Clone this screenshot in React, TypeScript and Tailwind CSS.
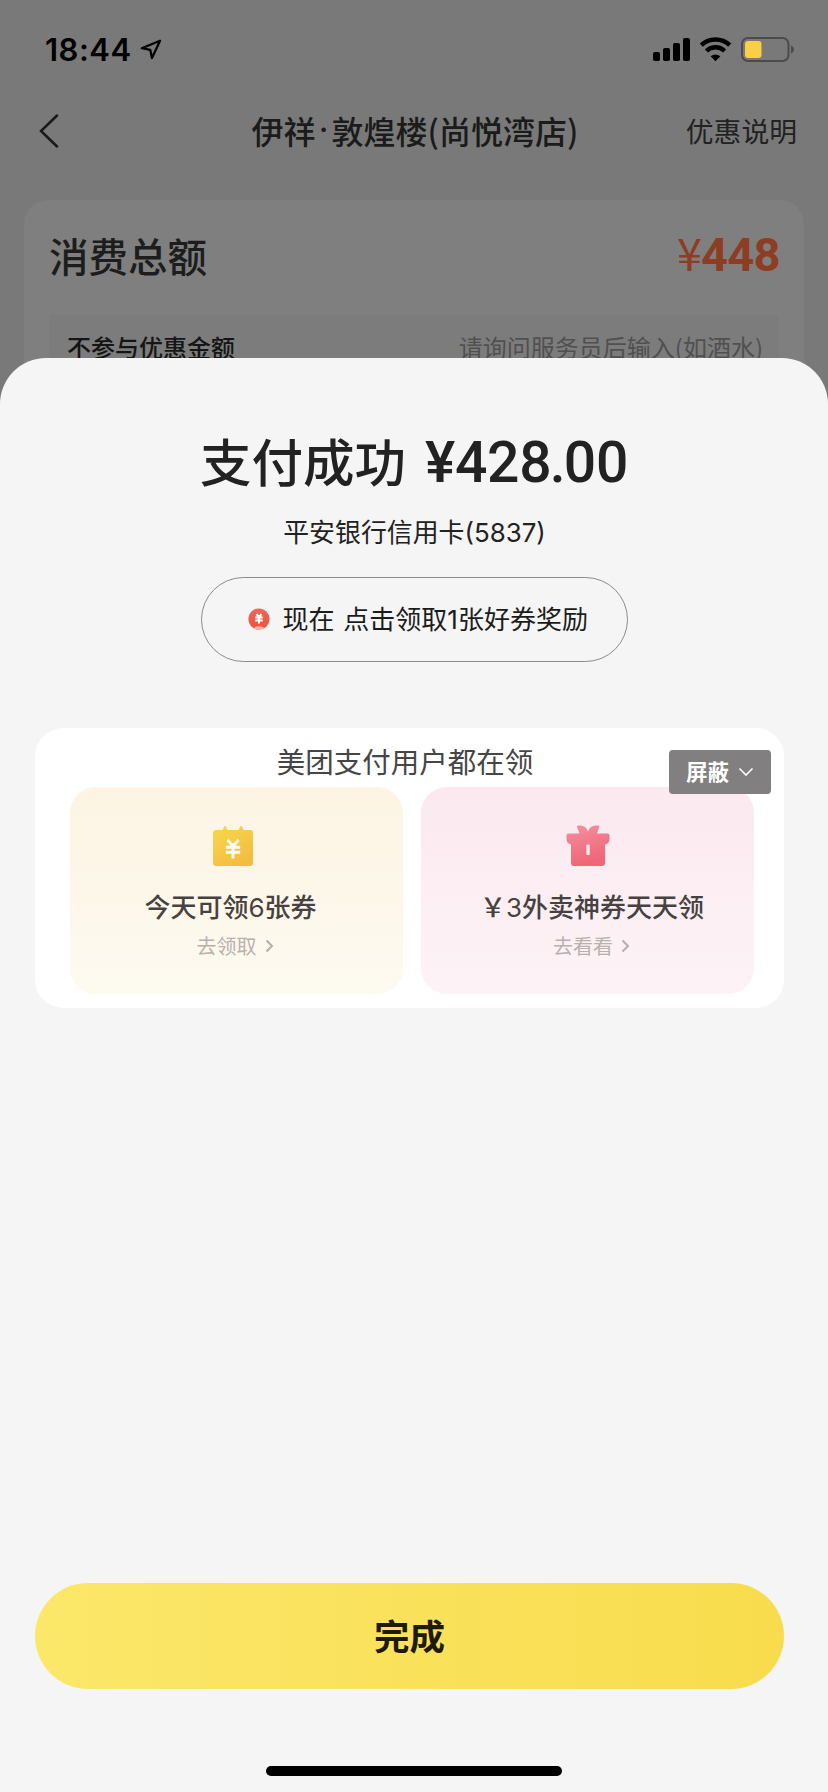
import React from "react";

const StatusIcons = () => (
  <svg className="h-[26px] w-[144px]" viewBox="0 0 144 26">
    <rect x="1" y="15" width="7" height="9" rx="1.8" fill="#000" />
    <rect x="11" y="11" width="7" height="13" rx="1.8" fill="#000" />
    <rect x="21" y="6" width="7" height="18" rx="1.8" fill="#000" />
    <rect x="31" y="1" width="7" height="23" rx="1.8" fill="#000" />
    <g fill="none" stroke="#000">
      <path d="M49.3 8.2a20.5 20.5 0 0 1 28.4 0" strokeWidth="4.4" />
      <path d="M54.4 14a13 13 0 0 1 18.2 0" strokeWidth="4.4" />
    </g>
    <path d="M58.6 19.3a7.3 7.3 0 0 1 9.8 0L63.5 24.3z" fill="#000" />
    <rect x="90" y="1" width="46.5" height="23" rx="6" fill="none" stroke="#4b4b4b" strokeWidth="2" />
    <rect x="93" y="4" width="16.5" height="17" rx="3" fill="#f9cf45" />
    <path d="M139 8.5c4 1.500 4 6.500 0 8z" fill="#4b4b4b" />
  </svg>
);

const LocationIcon = () => (
  <svg className="ml-[8px] h-[22px] w-[22px]" viewBox="0 0 22 22">
    <path d="M20 1.700 1.800 9.200 10.200 10.800 12 19z" fill="none" stroke="#000" strokeWidth="2.300" strokeLinejoin="round" />
  </svg>
);

const CoinIcon = () => (
  <svg className="h-[22px] w-[22px] shrink-0 -translate-y-px" viewBox="0 0 22 22">
    <defs>
      <linearGradient id="coin" x1="0" y1="0" x2="0" y2="1">
        <stop offset="0" stopColor="#e96a5b" />
        <stop offset="1" stopColor="#ec5138" />
      </linearGradient>
      <clipPath id="coinClip"><circle cx="11" cy="11" r="10.600" /></clipPath>
    </defs>
    <circle cx="11" cy="11" r="10.600" fill="url(#coin)" />
    <ellipse cx="11" cy="21.500" rx="6" ry="3.200" fill="#f9b3a4" clipPath="url(#coinClip)" />
    <path d="M8.500 6.200 11 9l2.500-2.800M7.300 9.500h7.400M7.300 12.500h7.400M11 9v6.500" stroke="#fff" strokeWidth="2" fill="none" />
  </svg>
);

const CalendarIcon = () => (
  <svg className="-ml-[8px] h-[42px] w-[42px]" viewBox="0 0 42 42">
    <defs>
      <linearGradient id="cal" x1="0" y1="0" x2="0.600" y2="1">
        <stop offset="0" stopColor="#f8d84c" />
        <stop offset="1" stopColor="#f3bd42" />
      </linearGradient>
    </defs>
    <path d="M4 5h6.500l2-4h1l2 4h11l2-4h1l2 4H38a3 3 0 0 1 3 3v30a3 3 0 0 1-3 3H4a3 3 0 0 1-3-3V8a3 3 0 0 1 3-3z" fill="url(#cal)" />
    <path d="M15.500 15l5.500 6 5.500-6M13.800 22.200h14.400M13.800 27.200h14.400M21 21v12.500" stroke="#fffdf2" strokeWidth="2.900" fill="none" />
  </svg>
);

const GiftIcon = () => (
  <svg className="h-[42px] w-[44px]" viewBox="0 0 44 42">
    <defs>
      <linearGradient id="gift" x1="0" y1="0" x2="0.300" y2="1">
        <stop offset="0" stopColor="#f68f9e" />
        <stop offset="1" stopColor="#ee6677" />
      </linearGradient>
    </defs>
    <path
      d="M12 0.500C17 0 21 2 22 7C23 2 27 0 32.500 0.500C33.500 0.600 33.500 1.500 33 2.500L31 8.500H41.500A2 2 0 0 1 43.500 10.500V14C43.500 17 42 19 39 19.500V38A3 3 0 0 1 36 41H8A3 3 0 0 1 5 38V19.500C2 19 .5 17 .5 14V10.500A2 2 0 0 1 2.500 8.500H13.500L11.300 2.500C10.800 1.500 11 .6 12 .5Z"
      fill="url(#gift)"
    />
    <rect x="20.400" y="19.500" width="3.300" height="10.500" rx=".8" fill="#fdecef" />
  </svg>
);

const ArrowRight = () => (
  <svg className="ml-[8px] h-[14px] w-[9px]" viewBox="0 0 9 14">
    <path d="M1.500 1.500 7 7l-5.500 5.500" fill="none" stroke="#b5adab" strokeWidth="1.900" />
  </svg>
);

type CouponProps = { icon: React.ReactNode; title: React.ReactNode; action: string; tone: string; titleNudge: string; actionNudge: string };

const Coupon = ({ icon, title, action, tone, titleNudge, actionNudge }: CouponProps) => (
  <div className={`flex h-[207px] w-[333px] shrink-0 flex-col items-center rounded-[26px] pt-[38px] ${tone}`}>
    {icon}
    <div className={`mt-[19px] h-[40px] whitespace-nowrap text-[26px] font-medium leading-[40px] text-[#474241] ${titleNudge}`}>{title}</div>
    <div className={`mt-[2px] flex items-center text-[20px] leading-[36px] text-[#b9b1ae] ${actionNudge}`}>
      {action}
      <ArrowRight />
    </div>
  </div>
);

export default function App() {
  return (
    <div className="flex h-[1792px] w-[828px] flex-col overflow-hidden bg-[#797979] font-['Noto_Sans_CJK_SC',sans-serif]">
      <div className="flex h-[410px] shrink-0 flex-col">
        <div className="flex h-[98px] items-center justify-between pl-[45px] pr-[32px] pt-[2px]">
          <div className="flex items-center">
            <span className="font-['Inter',sans-serif] text-[31px] font-semibold leading-[38px] tracking-[0.5px] text-black">18:44</span>
            <LocationIcon />
          </div>
          <StatusIcons />
        </div>
        <div className="grid h-[66px] grid-cols-[1fr_auto_1fr] items-center pl-[39px] pr-[31px]">
          <svg className="h-[34px] w-[20px]" viewBox="0 0 20 34">
            <path d="M18 1.500 2 17l16 15.500" fill="none" stroke="#191919" strokeWidth="2.500" strokeLinecap="round" />
          </svg>
          <div className="flex h-[48px] -translate-y-px pr-[6px] text-[32px] font-medium leading-[48px] text-[#1b1b1b]">
            <span>伊祥</span>
            <span className="w-[16px] text-center font-['Inter',sans-serif]">·</span>
            <span>敦煌楼(尚悦湾店)</span>
          </div>
          <div className="-translate-y-px text-right text-[27.800px] leading-[40px] text-[#222]">优惠说明</div>
        </div>
        <div className="mx-[24px] mt-[36px] flex h-[210px] flex-col rounded-t-[24px] bg-[#7f7f7f] px-[25px]">
          <div className="flex h-[115px] items-center justify-between pb-[6px]">
            <span className="text-[39.500px] font-medium text-[#1d1d1d]">消费总额</span>
            <span className="-mr-px flex items-baseline text-[#8e3c22]">
              <span className="-mr-px text-[45px]">¥</span>
              <span className="font-['Roboto',sans-serif] text-[47px] font-bold tracking-[-0.600px]">448</span>
            </span>
          </div>
          <div className="flex h-[95px] items-start justify-between bg-[#7c7c7c] pl-[18px] pr-[16px] pt-[14px] text-[24px] leading-[36px]">
            <span className="font-medium text-[#151515]">不参与优惠金额</span>
            <span className="text-[#505050]">请询问服务员后输入(如酒水)</span>
          </div>
        </div>
      </div>

      <div className="-mt-[52px] flex flex-1 flex-col items-center rounded-t-[46px] bg-[#f5f5f5]">
        <div className="mt-[62px] flex h-[80px] items-baseline whitespace-nowrap text-[#222]">
          <span className="text-[51.500px] font-medium leading-[80px]">支付成功</span>
          <span className="ml-[19px] font-['Roboto',sans-serif] text-[57px] font-medium leading-[80px] tracking-[-0.300px]">
            ¥428<span className="-mx-[1.500px]">.</span>00
          </span>
        </div>
        <div className="mt-[11px] h-[40px] pl-px text-[25.900px] leading-[40px] text-[#222]">
          平安银行信用卡<span className="font-['Inter',sans-serif]">(5837)</span>
        </div>
        <div className="mt-[26px] flex h-[85px] w-[427px] shrink-0 items-center rounded-full border border-[#8b8b8b] pl-[46px]">
          <CoinIcon />
          <span className="ml-[13px] -translate-y-px whitespace-nowrap text-[26px] leading-[40px] text-[#1c1c1c]">
            <span className="mr-[3px]">现在 </span>点击领取<span className="font-['Inter',sans-serif]">1</span>张好券奖励
          </span>
        </div>

        <div className="relative ml-[35px] mt-[66px] h-[280px] w-[749px] shrink-0 self-start rounded-[28px] bg-white px-[35px]">
          <div className="h-[59px] pr-[9px] pt-[10px] text-center text-[28.500px] leading-[46px] text-[#464646]">美团支付用户都在领</div>
          <div className="flex gap-[18px]">
            <Coupon
              icon={<CalendarIcon />}
              title={<>今天可领<span className="font-['Inter',sans-serif] font-normal">6</span>张券</>}
              action="去领取"
              tone="bg-linear-to-b from-[#fdf4e3] to-[#fdfaf0]"
              titleNudge="-ml-[12px]"
              actionNudge="-ml-[3px]"
            />
            <Coupon
              icon={<GiftIcon />}
              title={<>￥<span className="font-['Inter',sans-serif] font-normal">3</span>外卖神券天天领</>}
              action="去看看"
              tone="bg-linear-to-b from-[#fbe9ef] to-[#fdf3f6]"
              titleNudge="ml-[9px]"
              actionNudge="ml-[8px]"
            />
          </div>
          <div className="absolute right-[13px] top-[22px] flex h-[44px] w-[102px] items-center rounded-[4px] bg-[#7d7b7c]/97 pb-px pl-[17px] text-[21.500px] font-bold text-white">
            屏蔽
            <svg className="ml-[9px] h-[10px] w-[16px]" viewBox="0 0 16 10">
              <path d="M1.500 1.500 8 8l6.500-6.500" fill="none" stroke="#fff" strokeWidth="1.600" />
            </svg>
          </div>
        </div>

        <button className="ml-[35px] mt-auto h-[106px] w-[749px] shrink-0 self-start rounded-full bg-linear-to-r from-[#fbe769] to-[#f8dc4c] pb-[2px] text-[35.500px] font-bold text-[#1f1a08]">
          完成
        </button>
        <div className="mb-[16px] mt-[77px] h-[10px] w-[296px] shrink-0 rounded-full bg-black" />
      </div>
    </div>
  );
}
